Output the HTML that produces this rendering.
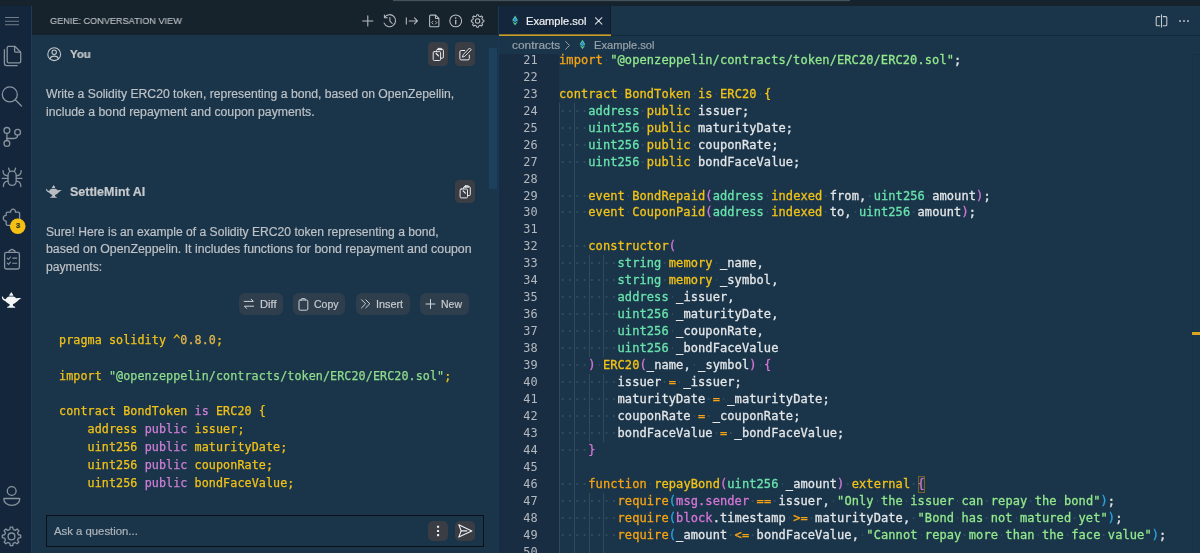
<!DOCTYPE html>
<html lang="en">
<head>
<meta charset="utf-8">
<title>Genie: Conversation View - Example.sol</title>
<style>
*{box-sizing:border-box;margin:0;padding:0}
html,body{width:1200px;height:553px;overflow:hidden;background:#1a354a}
body{position:relative;font-family:"Liberation Sans",sans-serif;color:#bec2c6;-webkit-font-smoothing:antialiased}
.abs{position:absolute}
svg{position:absolute;overflow:visible}
/* frame */
#top{left:0;top:0;width:1200px;height:6px;background:#16232c}
#topbar{left:393px;top:0;width:457px;height:2px;background:linear-gradient(#46525a 0,#46525a 50%,#1e2a33 50%,#1e2a33 100%)}
#act{left:0;top:6px;width:31px;height:547px;background:#13263b}
#actb{left:31px;top:6px;width:1px;height:547px;background:#1b3b57}
#hdr{left:32px;top:6px;width:466px;height:29px;background:#16232c}
#side{left:32px;top:35px;width:466px;height:518px;background:#1a354a}
#sdiv{left:497.6px;top:6px;width:1px;height:547px;background:#17385a}
#sscroll{left:489px;top:48px;width:8.4px;height:140.7px;background:#1d415c}
#tabs{left:498.5px;top:6px;width:702px;height:29px;background:#1a354a}
#tabsb{left:498.5px;top:34.5px;width:702px;height:1.2px;background:#15293c}
#tab{left:498.5px;top:6px;width:112.4px;height:29px;background:#13263b;border-right:1px solid #101d2a}
#tabu{left:498.5px;top:34px;width:112.4px;height:2px;background:linear-gradient(#8a7228 0,#8a7228 50%,#c79d28 50%,#c79d28 100%)}
#bc{left:498.5px;top:36px;width:702px;height:18px;background:#1a354a}
#gut{left:498.5px;top:54px;width:60.5px;height:499px;background:#192d42}
#code{left:559px;top:54px;width:641px;height:499px;background:#1a354a}
#ovr{left:1191.5px;top:54px;width:9px;height:499px;border-left:1px solid #17304a;border-top:1px solid #17304a}
#ovm{left:1192px;top:332.3px;width:8px;height:2.3px;background:#d9a521}
/* text */
.t{position:absolute;white-space:pre;line-height:1;transform-origin:0 50%;will-change:transform;-webkit-text-stroke:.18px currentColor}
#title{left:49.5px;top:16px;font-size:9.9px;color:#c3c7cb;letter-spacing:.05px}
.b{font-weight:bold;color:#d2d5d8}
.p1{font-size:11.75px;color:#bec2c6}
.btn{position:absolute;background:#3a3e44;border-radius:4.5px}
.cbtn{position:absolute;background:#2f3e4c;border-radius:6px;height:22px;top:293px}
.cbtn span{position:absolute;top:5.6px;font-size:10.6px;line-height:1;color:#d2d6da;white-space:pre}
/* editor */
.ln,.cl,.cc{position:absolute;white-space:pre;will-change:transform;font-family:"DejaVu Sans Mono","Liberation Mono",monospace}
.ln{left:498.5px;width:38.5px;text-align:right;font-size:11.9px;line-height:16.96px;height:16.96px;color:#b4b9bf;letter-spacing:-.05px}
.cl{left:559.10px;font-size:12px;line-height:16.96px;height:16.96px;letter-spacing:.09px}
.cl span,.cl i{display:inline-block;font-style:normal}
.cl span{-webkit-text-stroke:.3px currentColor}
.cc span{-webkit-text-stroke:.25px currentColor}
.cl i{height:16.96px;vertical-align:top;background:linear-gradient(90deg,transparent 0,transparent 3.1px,#2f4b5f 3.1px,#2f4b5f 4.7px,transparent 4.7px) 0 6.6px/7.314px 1.9px repeat-x}
.ig{position:absolute;width:1px;height:16.96px;background:#2f4a59}
.o{color:#f6a312}.y{color:#f2c218}.m{color:#69e3ac}.s{color:#93e88c}.w{color:#e4e6e8}.p{color:#d676d6}.b2{color:#2ba6e2}
.cl .b{color:#2ba6e2;font-weight:normal}
.bm{outline:1px solid #74622a;outline-offset:-1px;background:#1b3a43}
.cc{left:59.3px;letter-spacing:.097px;font-size:11.7px;line-height:17.80px;height:17.80px}
.cy{color:#f2c218}.cp{color:#cf7fd6}.cs{color:#8fdc8c}.cn{color:#e6b84a}
</style>
</head>
<body>
<div class="abs" id="top"></div><div class="abs" id="topbar"></div>
<div class="abs" id="act"></div><div class="abs" id="actb"></div>
<div class="abs" id="hdr"></div><div class="abs" id="side"></div>
<div class="abs" id="sscroll"></div><div class="abs" id="sdiv"></div>
<div class="abs" id="tabs"></div><div class="abs" id="tabsb"></div>
<div class="abs" id="tab"></div><div class="abs" id="tabu"></div>
<div class="abs" id="bc"></div>
<div class="abs" id="gut"></div><div class="abs" id="code"></div>
<div class="abs" id="ovr"></div><div class="abs" id="ovm"></div>

<svg width="1200" height="553" viewBox="0 0 1200 553" style="left:0;top:0;pointer-events:none" fill="none" stroke-linecap="round" stroke-linejoin="round" ><g stroke="#737e89" stroke-width="1.05" stroke-linecap="butt"><path d="M5 17.4H19M5 21.2H19M5 24.8H19"/></g><g stroke="#88939e" stroke-width="1.3"><path d="M8.6 46.3h6.2l5.9 5.9v9.3a1.4 1.4 0 0 1-1.4 1.4h-10.7a1.4 1.4 0 0 1-1.4-1.4v-13.8a1.4 1.4 0 0 1 1.400-1.4z"/><path d="M14.6 46.6v4.4a1.2 1.2 0 0 0 1.2 1.2h4.6"/><path d="M4.4 49.6v13.6a2.4 2.4 0 0 0 2.4 2.4h10.4"/><circle cx="9.8" cy="94.4" r="7.5"/><path d="M15.2 99.8l6.3 6.200"/><circle cx="6.9" cy="130.4" r="2.9"/><circle cx="17.6" cy="132.2" r="2.9"/><circle cx="6.9" cy="143.4" r="2.9"/><path d="M6.9 133.4v7.1"/><path d="M17.6 135.2c0 2.6-2 3.300-4.600 3.300h-6.100"/><rect x="8" y="171.200" width="8.200" height="14.200" rx="4.100"/><path d="M9.700 171.300l-1.100-3.100M14.500 171.300l1.100-3.100"/><path d="M7.900 175.800c-3.300 0-4.900-1.600-4.900-5.200M16.300 175.800c3.300 0 4.900-1.600 4.900-5.200"/><path d="M7.900 178.400h-5.600M16.300 178.400h5.600"/><path d="M7.900 181.200c-3.300 0-4.500 2-4.500 5.400M16.300 181.200c3.300 0 4.500 2 4.500 5.400"/><path d="M7.600 212.100h3.100a2.400 2.400 0 1 1 4.700 0h2.800a1.400 1.400 0 0 1 1.400 1.400v10.500a1.400 1.400 0 0 1-1.400 1.400h-10.600a1.400 1.400 0 0 1-1.400-1.400v-2.900a2.900 2.900 0 1 1 0-5.800v-1.800a1.400 1.400 0 0 1 1.400-1.400z"/><rect x="4.600" y="252.400" width="14.800" height="16.600" rx="1.800"/><path d="M9 252.400v-1.100a1 1 0 0 1 1-1h.600a1.500 1.500 0 0 1 2.800 0h.600a1 1 0 0 1 1 1v1.100" /><path d="M7.300 258.100l1.200 1.200 2-2.300M12.700 258.100h4M7.300 263.200l1.200 1.200 2-2.300M12.700 263.200h4" stroke-width="1.100"/><circle cx="11.700" cy="491" r="4.400"/><path d="M4.300 498.500h15a.500.500 0 0 1 .500.500c0 3.600-3.400 6.300-8 6.300s-8-2.700-8-6.300a.500.500 0 0 1 .500-.500z"/></g><path d="M9.84 529.50 L10.26 527.18 L12.74 527.18 L13.16 529.50 L15.21 530.35 L17.14 529.01 L18.89 530.76 L17.55 532.69 L18.40 534.74 L20.72 535.16 L20.72 537.64 L18.40 538.06 L17.55 540.11 L18.89 542.04 L17.14 543.79 L15.21 542.45 L13.16 543.30 L12.74 545.62 L10.26 545.62 L9.84 543.30 L7.79 542.45 L5.86 543.79 L4.11 542.04 L5.45 540.11 L4.60 538.06 L2.28 537.64 L2.28 535.16 L4.60 534.74 L5.45 532.69 L4.11 530.76 L5.86 529.01 L7.79 530.35Z" stroke="#88939e" stroke-width="1.3" stroke-linejoin="round" fill="none"/><circle cx="11.5" cy="536.4" r="3.4" stroke="#88939e" stroke-width="1.3" fill="none"/><circle cx="17.750" cy="226.200" r="7.800" fill="#f3c013" stroke="none"/><path d="M 11.39 291.95 C 12.05 293.14 13.35 294.50 13.24 295.80 L 9.22 295.80 C 9.12 294.50 10.74 293.14 11.39 291.95 Z" fill="#f4f5f6" stroke="none"/><path d="M 1.95 296.50 C 1.63 298.02 2.44 299.92 5.43 301.28 C 6.78 302.63 8.14 303.72 9.66 304.26 L 9.33 305.89 L 7.33 306.70 L 7.05 307.79 L 15.30 307.79 L 15.03 306.70 L 13.13 305.89 L 12.91 304.26 C 14.92 303.45 16.82 301.82 18.18 300.46 C 19.26 299.38 20.35 298.56 21.60 298.02 C 19.80 297.91 17.91 298.13 16.28 298.35 C 15.46 297.37 14.38 296.67 13.29 296.50 L 9.22 296.50 C 7.60 296.72 6.24 297.91 5.75 299.32 C 4.34 299.22 3.15 298.29 2.71 296.61 L 1.95 296.50 Z" fill="#f4f5f6" stroke="none"/></svg>

<!-- sidebar header -->
<svg width="1200" height="553" viewBox="0 0 1200 553" style="left:0;top:0;pointer-events:none" fill="none" stroke-linecap="round" stroke-linejoin="round" ><g stroke="#b9bdc1" stroke-width="1.05"><path d="M362.700 20.9h10.200M367.800 15.799999999999999v10.200"/><path d="M384.600 17.300a6 6 0 1 1-.500 5.800"/><path d="M384.400 14.900v2.900h2.900"/><path d="M389.900 17.500v3.700l2.300 2.300"/><path d="M406.300 17.700v6.400M409.200 20.9h8.200M414.400 17.900l3.100 3-3.100 3"/><path d="M430.600 15.100h5l3.300 3.300v7.400a1 1 0 0 1-1 1h-7.300a1 1 0 0 1-1-1v-9.700a1 1 0 0 1 1-1z"/><path d="M435.400 15.300v2.500a.800.800 0 0 0 .800.800h2.500"/><path d="M433 21.200l-1.300 1.400 1.300 1.400M435.500 21.200l1.300 1.400-1.300 1.400" stroke-width=".9"/><circle cx="455.700" cy="20.9" r="5.900"/><path d="M455.700 20.300v3.600" stroke-width="1.3"/><circle cx="455.700" cy="18.100" r=".800" fill="#b9bdc1" stroke="none"/></g><path d="M476.43 16.14 L476.76 14.76 L478.44 14.76 L478.77 16.14 L480.21 16.74 L481.42 15.99 L482.61 17.18 L481.86 18.39 L482.46 19.83 L483.84 20.16 L483.84 21.84 L482.46 22.17 L481.86 23.61 L482.61 24.82 L481.42 26.01 L480.21 25.26 L478.77 25.86 L478.44 27.24 L476.76 27.24 L476.43 25.86 L474.99 25.26 L473.78 26.01 L472.59 24.82 L473.34 23.61 L472.74 22.17 L471.36 21.84 L471.36 20.16 L472.74 19.83 L473.34 18.39 L472.59 17.18 L473.78 15.99 L474.99 16.74Z" stroke="#b9bdc1" stroke-width="1.05" stroke-linejoin="round" fill="none"/><circle cx="477.6" cy="21" r="2.2" stroke="#b9bdc1" stroke-width="1.05" fill="none"/></svg>

<!-- conversation -->
<div class="btn" style="left:428.3px;top:42.3px;width:19.8px;height:23.6px"></div>
<div class="btn" style="left:455.2px;top:42.3px;width:19.8px;height:23.6px"></div>

<div class="btn" style="left:455.2px;top:179.7px;width:19.8px;height:23.6px"></div>

<div class="cbtn" style="left:238.8px;width:44.4px"></div>
<div class="cbtn" style="left:293.2px;width:52px"></div>
<div class="cbtn" style="left:355.6px;width:54.6px"></div>
<div class="cbtn" style="left:420.2px;width:48.8px"></div>
<svg width="1200" height="553" viewBox="0 0 1200 553" style="left:0;top:0;pointer-events:none" fill="none" stroke-linecap="round" stroke-linejoin="round" ><g stroke="#eef0f2" stroke-width=".95"><rect x="436.50" y="49.40" width="6.900" height="8.800" rx="1.100"/><path d="M438.65 48.40h2.600a.600.600 0 0 1 .600.600v.700h-3.800v-.700a.600.600 0 0 1 .600-.600z"/><rect x="433.20" y="51.60" width="7.400" height="8.900" rx="1.100" fill="#3a3e44"/><path d="M436.20 53.50l2.300 2.300" stroke-width="1.200"/></g><g stroke="#eef0f2" stroke-width="1"><path d="M464.60 50.50h-3.400a1.300 1.300 0 0 0-1.300 1.300v6.800a1.300 1.300 0 0 0 1.300 1.300h6.800a1.300 1.300 0 0 0 1.300-1.300v-3.400"/><path d="M469.80 48.30l1.500 1.500-6.600 6.600-2.300.800.800-2.300z" stroke-width=".900" fill="#3a3e44"/></g><g stroke="#eef0f2" stroke-width=".95"><rect x="463.40" y="186.80" width="6.900" height="8.800" rx="1.100"/><path d="M465.55 185.80h2.600a.600.600 0 0 1 .600.600v.700h-3.800v-.700a.600.600 0 0 1 .600-.600z"/><rect x="460.10" y="189.00" width="7.400" height="8.900" rx="1.100" fill="#3a3e44"/><path d="M463.10 190.90l2.300 2.300" stroke-width="1.200"/></g><g stroke="#c5c9cd" stroke-width="1.050"><circle cx="54.200" cy="54.200" r="6.400"/><circle cx="54.200" cy="52.200" r="2.200"/><path d="M50 59c.400-1.800 1.900-2.900 4.200-2.900s3.800 1.100 4.200 2.900"/></g><path d="M 53.71 185.00 C 54.24 185.96 55.29 187.06 55.20 188.12 L 51.95 188.12 C 51.86 187.06 53.18 185.96 53.71 185.00 Z" fill="#b9bdc1" stroke="none"/><path d="M 46.06 188.69 C 45.80 189.92 46.46 191.46 48.88 192.56 C 49.97 193.65 51.07 194.53 52.30 194.97 L 52.04 196.29 L 50.41 196.95 L 50.19 197.83 L 56.87 197.83 L 56.65 196.95 L 55.12 196.29 L 54.94 194.97 C 56.57 194.31 58.10 192.99 59.20 191.90 C 60.08 191.02 60.96 190.36 61.97 189.92 C 60.52 189.83 58.98 190.01 57.67 190.18 C 57.01 189.39 56.13 188.82 55.25 188.69 L 51.95 188.69 C 50.63 188.86 49.53 189.83 49.14 190.97 C 48.00 190.88 47.03 190.14 46.68 188.78 L 46.06 188.69 Z" fill="#b9bdc1" stroke="none"/><g stroke="#cfd3d7" stroke-width="1"><path d="M244.200 301.400h9.200l-2.200-2.200M253.600 306.200h-9.200l2.200 2.200"/><rect x="299" y="300" width="8.800" height="10.200" rx="1.200"/><path d="M301.400 300v-.700a.700.700 0 0 1 .700-.700h2.600a.700.700 0 0 1 .700.700v.700"/><path d="M361.600 299.800l4 4-4 4M365.800 299.800l4 4-4 4"/><path d="M426 304h9M430.500 299.500v9"/></g></svg>

<div class="cc" style="top:332.15px"><span class="cy">pragma</span> <span class="cy">solidity</span> <span class="cy">^</span><span class="cn">0.8.0</span><span class="cy">;</span></div>
<div class="cc" style="top:349.95px"></div>
<div class="cc" style="top:367.75px"><span class="cy">import</span> <span class="cs">"@openzeppelin/contracts/token/ERC20/ERC20.sol"</span><span class="cy">;</span></div>
<div class="cc" style="top:385.55px"></div>
<div class="cc" style="top:403.35px"><span class="cy">contract</span> <span class="cy">BondToken</span> <span class="cp">is</span> <span class="cy">ERC20</span> <span class="cy">{</span></div>
<div class="cc" style="top:421.15px">    <span class="cy">address</span> <span class="cp">public</span> <span class="cy">issuer</span><span class="cy">;</span></div>
<div class="cc" style="top:438.95px">    <span class="cy">uint256</span> <span class="cp">public</span> <span class="cy">maturityDate</span><span class="cy">;</span></div>
<div class="cc" style="top:456.75px">    <span class="cy">uint256</span> <span class="cp">public</span> <span class="cy">couponRate</span><span class="cy">;</span></div>
<div class="cc" style="top:474.55px">    <span class="cy">uint256</span> <span class="cp">public</span> <span class="cy">bondFaceValue</span><span class="cy">;</span></div>


<!-- input -->
<div class="abs" style="left:45.6px;top:515.2px;width:438.4px;height:31.4px;border:1.2px solid #0a1118;background:#1a354a"></div>
<div class="btn" style="left:428.2px;top:521px;width:19.8px;height:19.6px;border-radius:5px"></div>
<div class="btn" style="left:455.2px;top:521px;width:19.8px;height:19.6px;border-radius:5px"></div>
<svg width="1200" height="553" viewBox="0 0 1200 553" style="left:0;top:0;pointer-events:none" fill="none" stroke-linecap="round" stroke-linejoin="round" ><g fill="#f0f1f2" stroke="none"><rect x="437" y="525.700" width="2.100" height="2.100" rx=".400"/><rect x="437" y="529.900" width="2.100" height="2.100" rx=".400"/><rect x="437" y="534.100" width="2.100" height="2.100" rx=".400"/></g><g stroke="#f0f1f2" stroke-width="1.100"><path d="M458.800 524.700l13 6.200-13 6.200 2.400-6.200z"/><path d="M461.200 530.900h5.600"/></g></svg>

<!-- tab + breadcrumbs -->
<svg width="1200" height="553" viewBox="0 0 1200 553" style="left:0;top:0;pointer-events:none" fill="none" stroke-linecap="round" stroke-linejoin="round" ><path d="M515.08 15.60 L517.95 20.31 L515.08 22.04 L512.20 20.31Z" fill="#55c9a0"/><path d="M515.08 17.67 L516.92 20.09 L515.08 21.23 L513.24 20.09Z" fill="#2b86ea"/><path d="M512.20 21.23 L515.08 22.96 L517.95 21.23 L515.08 25.38Z" fill="#55c9a0"/><path d="M582.48 39.70 L585.25 44.25 L582.48 45.92 L579.70 44.25Z" fill="#55c9a0"/><path d="M582.48 41.70 L584.25 44.03 L582.48 45.14 L580.70 44.03Z" fill="#2b86ea"/><path d="M579.70 45.14 L582.48 46.80 L585.25 45.14 L582.48 49.14Z" fill="#55c9a0"/><path d="M595.400 17.700l6.500 6.500M601.900 17.700l-6.500 6.500" stroke="#dcdfe2" stroke-width="1.050"/><path d="M565.600 41.500l3.900 3.900-3.900 3.900" stroke="#98a1a9" stroke-width="1"/><g stroke="#c5c9cd" stroke-width="1.050"><path d="M1159.800 16.600h-2.600a1 1 0 0 0-1 1v7.200a1 1 0 0 0 1 1h2.600M1163.200 16.600h2.600a1 1 0 0 1 1 1v7.200a1 1 0 0 1-1 1h-2.600M1161.500 14.700v12.200"/></g><g fill="#c5c9cd"><circle cx="1180" cy="21" r=".900"/><circle cx="1184" cy="21" r=".900"/><circle cx="1188" cy="21" r=".900"/></g></svg>

<!-- texts -->
<div class="t" id="t0" style="left:49.50px;top:15.82px;font-size:9.90px;color:#b9bdc1;transform:scaleX(0.9250)">GENIE: CONVERSATION VIEW</div>
<div class="t" id="t1" style="left:70.00px;top:48.40px;font-size:11.70px;color:#c6c9cc;font-weight:bold;transform:scaleX(0.9803)">You</div>
<div class="t" id="t2" style="left:46.40px;top:88.00px;font-size:12.00px;color:#bec2c6;transform:scaleX(1.0153)">Write a Solidity ERC20 token, representing a bond, based on OpenZepellin,</div>
<div class="t" id="t3" style="left:46.40px;top:106.00px;font-size:12.00px;color:#bec2c6;transform:scaleX(1.0218)">include a bond repayment and coupon payments.</div>
<div class="t" id="t4" style="left:69.80px;top:186.04px;font-size:12.00px;color:#c6c9cc;font-weight:bold;transform:scaleX(1.0411)">SettleMint AI</div>
<div class="t" id="t5" style="left:46.40px;top:226.00px;font-size:12.00px;color:#bec2c6;transform:scaleX(1.0095)">Sure! Here is an example of a Solidity ERC20 token representing a bond,</div>
<div class="t" id="t6" style="left:46.40px;top:243.00px;font-size:12.00px;color:#bec2c6;transform:scaleX(1.0290)">based on OpenZeppelin. It includes functions for bond repayment and coupon</div>
<div class="t" id="t7" style="left:46.40px;top:261.00px;font-size:12.00px;color:#bec2c6;transform:scaleX(1.0134)">payments:</div>
<div class="t" id="t8" style="left:259.60px;top:298.61px;font-size:10.50px;color:#c8ccd0;transform:scaleX(1.0667)">Diff</div>
<div class="t" id="t9" style="left:313.80px;top:298.61px;font-size:10.50px;color:#c8ccd0;transform:scaleX(0.9994)">Copy</div>
<div class="t" id="t10" style="left:375.80px;top:298.61px;font-size:10.50px;color:#c8ccd0;transform:scaleX(1.0318)">Insert</div>
<div class="t" id="t11" style="left:440.80px;top:298.61px;font-size:10.50px;color:#c8ccd0;transform:scaleX(0.9945)">New</div>
<div class="t" id="t12" style="left:53.70px;top:525.56px;font-size:10.80px;color:#aeb4ba;transform:scaleX(1.0498)">Ask a question...</div>
<div class="t" id="t13" style="left:525.80px;top:15.53px;font-size:10.60px;color:#f0f1f2;transform:scaleX(1.0467)">Example.sol</div>
<div class="t" id="t14" style="left:512.00px;top:40.05px;font-size:11.40px;color:#9aa3ab;transform:scaleX(1.0429)">contracts</div>
<div class="t" id="t15" style="left:593.50px;top:40.39px;font-size:11.00px;color:#9aa3ab;transform:scaleX(1.0096)">Example.sol</div>
<div class="t" id="t16" style="left:15.80px;top:222.33px;font-size:8.00px;color:#2b2b2b;font-weight:bold;transform:scaleX(0.9207)">3</div>

<!-- editor -->
<div class="ln" style="top:51.80px">21</div><div class="cl" style="top:51.80px"><span class="o">import</span><i> </i><span class="s">"@openzeppelin/contracts/token/ERC20/ERC20.sol"</span><span class="w">;</span></div>
<div class="ln" style="top:68.76px">22</div><div class="cl" style="top:68.76px"></div>
<div class="ln" style="top:85.73px">23</div><div class="cl" style="top:85.73px"><span class="y">contract</span><i> </i><span class="y">BondToken</span><i> </i><span class="y">is</span><i> </i><span class="y">ERC20</span><i> </i><span class="y">{</span></div>
<div class="ln" style="top:102.69px">24</div><div class="cl" style="top:102.69px"><i>    </i><span class="m">address</span><i> </i><span class="y">public</span><i> </i><span class="w">issuer</span><span class="w">;</span></div>
<div class="ig" style="top:102.69px;left:559.30px"></div><div class="ig" style="top:102.69px;left:573.93px"></div><div class="ln" style="top:119.66px">25</div><div class="cl" style="top:119.66px"><i>    </i><span class="m">uint256</span><i> </i><span class="y">public</span><i> </i><span class="w">maturityDate</span><span class="w">;</span></div>
<div class="ig" style="top:119.66px;left:559.30px"></div><div class="ig" style="top:119.66px;left:573.93px"></div><div class="ln" style="top:136.62px">26</div><div class="cl" style="top:136.62px"><i>    </i><span class="m">uint256</span><i> </i><span class="y">public</span><i> </i><span class="w">couponRate</span><span class="w">;</span></div>
<div class="ig" style="top:136.62px;left:559.30px"></div><div class="ig" style="top:136.62px;left:573.93px"></div><div class="ln" style="top:153.58px">27</div><div class="cl" style="top:153.58px"><i>    </i><span class="m">uint256</span><i> </i><span class="y">public</span><i> </i><span class="w">bondFaceValue</span><span class="w">;</span></div>
<div class="ig" style="top:153.58px;left:559.30px"></div><div class="ig" style="top:153.58px;left:573.93px"></div><div class="ln" style="top:170.55px">28</div><div class="cl" style="top:170.55px"></div>
<div class="ig" style="top:170.55px;left:559.30px"></div><div class="ig" style="top:170.55px;left:573.93px"></div><div class="ln" style="top:187.51px">29</div><div class="cl" style="top:187.51px"><i>    </i><span class="y">event</span><i> </i><span class="y">BondRepaid</span><span class="p">(</span><span class="m">address</span><i> </i><span class="y">indexed</span><i> </i><span class="w">from</span><span class="w">,</span><i> </i><span class="m">uint256</span><i> </i><span class="w">amount</span><span class="p">)</span><span class="w">;</span></div>
<div class="ig" style="top:187.51px;left:559.30px"></div><div class="ig" style="top:187.51px;left:573.93px"></div><div class="ln" style="top:204.48px">30</div><div class="cl" style="top:204.48px"><i>    </i><span class="y">event</span><i> </i><span class="y">CouponPaid</span><span class="p">(</span><span class="m">address</span><i> </i><span class="y">indexed</span><i> </i><span class="w">to</span><span class="w">,</span><i> </i><span class="m">uint256</span><i> </i><span class="w">amount</span><span class="p">)</span><span class="w">;</span></div>
<div class="ig" style="top:204.48px;left:559.30px"></div><div class="ig" style="top:204.48px;left:573.93px"></div><div class="ln" style="top:221.44px">31</div><div class="cl" style="top:221.44px"></div>
<div class="ig" style="top:221.44px;left:559.30px"></div><div class="ig" style="top:221.44px;left:573.93px"></div><div class="ln" style="top:238.40px">32</div><div class="cl" style="top:238.40px"><i>    </i><span class="y">constructor</span><span class="p">(</span></div>
<div class="ig" style="top:238.40px;left:559.30px"></div><div class="ig" style="top:238.40px;left:573.93px"></div><div class="ln" style="top:255.37px">33</div><div class="cl" style="top:255.37px"><i>        </i><span class="m">string</span><i> </i><span class="y">memory</span><i> </i><span class="w">_name</span><span class="w">,</span></div>
<div class="ig" style="top:255.37px;left:559.30px"></div><div class="ig" style="top:255.37px;left:573.93px"></div><div class="ig" style="top:255.37px;left:588.56px"></div><div class="ig" style="top:255.37px;left:603.18px"></div><div class="ln" style="top:272.33px">34</div><div class="cl" style="top:272.33px"><i>        </i><span class="m">string</span><i> </i><span class="y">memory</span><i> </i><span class="w">_symbol</span><span class="w">,</span></div>
<div class="ig" style="top:272.33px;left:559.30px"></div><div class="ig" style="top:272.33px;left:573.93px"></div><div class="ig" style="top:272.33px;left:588.56px"></div><div class="ig" style="top:272.33px;left:603.18px"></div><div class="ln" style="top:289.30px">35</div><div class="cl" style="top:289.30px"><i>        </i><span class="m">address</span><i> </i><span class="w">_issuer</span><span class="w">,</span></div>
<div class="ig" style="top:289.30px;left:559.30px"></div><div class="ig" style="top:289.30px;left:573.93px"></div><div class="ig" style="top:289.30px;left:588.56px"></div><div class="ig" style="top:289.30px;left:603.18px"></div><div class="ln" style="top:306.26px">36</div><div class="cl" style="top:306.26px"><i>        </i><span class="m">uint256</span><i> </i><span class="w">_maturityDate</span><span class="w">,</span></div>
<div class="ig" style="top:306.26px;left:559.30px"></div><div class="ig" style="top:306.26px;left:573.93px"></div><div class="ig" style="top:306.26px;left:588.56px"></div><div class="ig" style="top:306.26px;left:603.18px"></div><div class="ln" style="top:323.22px">37</div><div class="cl" style="top:323.22px"><i>        </i><span class="m">uint256</span><i> </i><span class="w">_couponRate</span><span class="w">,</span></div>
<div class="ig" style="top:323.22px;left:559.30px"></div><div class="ig" style="top:323.22px;left:573.93px"></div><div class="ig" style="top:323.22px;left:588.56px"></div><div class="ig" style="top:323.22px;left:603.18px"></div><div class="ln" style="top:340.19px">38</div><div class="cl" style="top:340.19px"><i>        </i><span class="m">uint256</span><i> </i><span class="w">_bondFaceValue</span></div>
<div class="ig" style="top:340.19px;left:559.30px"></div><div class="ig" style="top:340.19px;left:573.93px"></div><div class="ig" style="top:340.19px;left:588.56px"></div><div class="ig" style="top:340.19px;left:603.18px"></div><div class="ln" style="top:357.15px">39</div><div class="cl" style="top:357.15px"><i>    </i><span class="p">)</span><i> </i><span class="y">ERC20</span><span class="p">(</span><span class="w">_name</span><span class="w">,</span><i> </i><span class="w">_symbol</span><span class="p">)</span><i> </i><span class="p">{</span></div>
<div class="ig" style="top:357.15px;left:559.30px"></div><div class="ig" style="top:357.15px;left:573.93px"></div><div class="ln" style="top:374.12px">40</div><div class="cl" style="top:374.12px"><i>        </i><span class="w">issuer</span><i> </i><span class="o">=</span><i> </i><span class="w">_issuer</span><span class="w">;</span></div>
<div class="ig" style="top:374.12px;left:559.30px"></div><div class="ig" style="top:374.12px;left:573.93px"></div><div class="ig" style="top:374.12px;left:588.56px"></div><div class="ig" style="top:374.12px;left:603.18px"></div><div class="ln" style="top:391.08px">41</div><div class="cl" style="top:391.08px"><i>        </i><span class="w">maturityDate</span><i> </i><span class="o">=</span><i> </i><span class="w">_maturityDate</span><span class="w">;</span></div>
<div class="ig" style="top:391.08px;left:559.30px"></div><div class="ig" style="top:391.08px;left:573.93px"></div><div class="ig" style="top:391.08px;left:588.56px"></div><div class="ig" style="top:391.08px;left:603.18px"></div><div class="ln" style="top:408.04px">42</div><div class="cl" style="top:408.04px"><i>        </i><span class="w">couponRate</span><i> </i><span class="o">=</span><i> </i><span class="w">_couponRate</span><span class="w">;</span></div>
<div class="ig" style="top:408.04px;left:559.30px"></div><div class="ig" style="top:408.04px;left:573.93px"></div><div class="ig" style="top:408.04px;left:588.56px"></div><div class="ig" style="top:408.04px;left:603.18px"></div><div class="ln" style="top:425.01px">43</div><div class="cl" style="top:425.01px"><i>        </i><span class="w">bondFaceValue</span><i> </i><span class="o">=</span><i> </i><span class="w">_bondFaceValue</span><span class="w">;</span></div>
<div class="ig" style="top:425.01px;left:559.30px"></div><div class="ig" style="top:425.01px;left:573.93px"></div><div class="ig" style="top:425.01px;left:588.56px"></div><div class="ig" style="top:425.01px;left:603.18px"></div><div class="ln" style="top:441.97px">44</div><div class="cl" style="top:441.97px"><i>    </i><span class="p">}</span></div>
<div class="ig" style="top:441.97px;left:559.30px"></div><div class="ig" style="top:441.97px;left:573.93px"></div><div class="ln" style="top:458.94px">45</div><div class="cl" style="top:458.94px"></div>
<div class="ig" style="top:458.94px;left:559.30px"></div><div class="ig" style="top:458.94px;left:573.93px"></div><div class="ln" style="top:475.90px">46</div><div class="cl" style="top:475.90px"><i>    </i><span class="o">function</span><i> </i><span class="y">repayBond</span><span class="p">(</span><span class="m">uint256</span><i> </i><span class="w">_amount</span><span class="p">)</span><i> </i><span class="y">external</span><i> </i><span class="p bm">{</span></div>
<div class="ig" style="top:475.90px;left:559.30px"></div><div class="ig" style="top:475.90px;left:573.93px"></div><div class="ln" style="top:492.86px">47</div><div class="cl" style="top:492.86px"><i>        </i><span class="o">require</span><span class="b">(</span><span class="p">msg</span><span class="p">.</span><span class="p">sender</span><i> </i><span class="o">==</span><i> </i><span class="w">issuer</span><span class="w">,</span><i> </i><span class="s">"Only</span><i> </i><span class="s">the</span><i> </i><span class="s">issuer</span><i> </i><span class="s">can</span><i> </i><span class="s">repay</span><i> </i><span class="s">the</span><i> </i><span class="s">bond"</span><span class="b">)</span><span class="w">;</span></div>
<div class="ig" style="top:492.86px;left:559.30px"></div><div class="ig" style="top:492.86px;left:573.93px"></div><div class="ig" style="top:492.86px;left:588.56px"></div><div class="ig" style="top:492.86px;left:603.18px"></div><div class="ln" style="top:509.83px">48</div><div class="cl" style="top:509.83px"><i>        </i><span class="o">require</span><span class="b">(</span><span class="p">block</span><span class="w">.</span><span class="w">timestamp</span><i> </i><span class="o">&gt;=</span><i> </i><span class="w">maturityDate</span><span class="w">,</span><i> </i><span class="s">"Bond</span><i> </i><span class="s">has</span><i> </i><span class="s">not</span><i> </i><span class="s">matured</span><i> </i><span class="s">yet"</span><span class="b">)</span><span class="w">;</span></div>
<div class="ig" style="top:509.83px;left:559.30px"></div><div class="ig" style="top:509.83px;left:573.93px"></div><div class="ig" style="top:509.83px;left:588.56px"></div><div class="ig" style="top:509.83px;left:603.18px"></div><div class="ln" style="top:526.79px">49</div><div class="cl" style="top:526.79px"><i>        </i><span class="o">require</span><span class="b">(</span><span class="w">_amount</span><i> </i><span class="o">&lt;=</span><i> </i><span class="w">bondFaceValue</span><span class="w">,</span><i> </i><span class="s">"Cannot</span><i> </i><span class="s">repay</span><i> </i><span class="s">more</span><i> </i><span class="s">than</span><i> </i><span class="s">the</span><i> </i><span class="s">face</span><i> </i><span class="s">value"</span><span class="b">)</span><span class="w">;</span></div>
<div class="ig" style="top:526.79px;left:559.30px"></div><div class="ig" style="top:526.79px;left:573.93px"></div><div class="ig" style="top:526.79px;left:588.56px"></div><div class="ig" style="top:526.79px;left:603.18px"></div><div class="ln" style="top:543.76px">50</div><div class="cl" style="top:543.76px"></div>
<div class="ig" style="top:543.76px;left:559.30px"></div><div class="ig" style="top:543.76px;left:573.93px"></div><div class="ig" style="top:543.76px;left:588.56px"></div><div class="ig" style="top:543.76px;left:603.18px"></div>
</body>
</html>
